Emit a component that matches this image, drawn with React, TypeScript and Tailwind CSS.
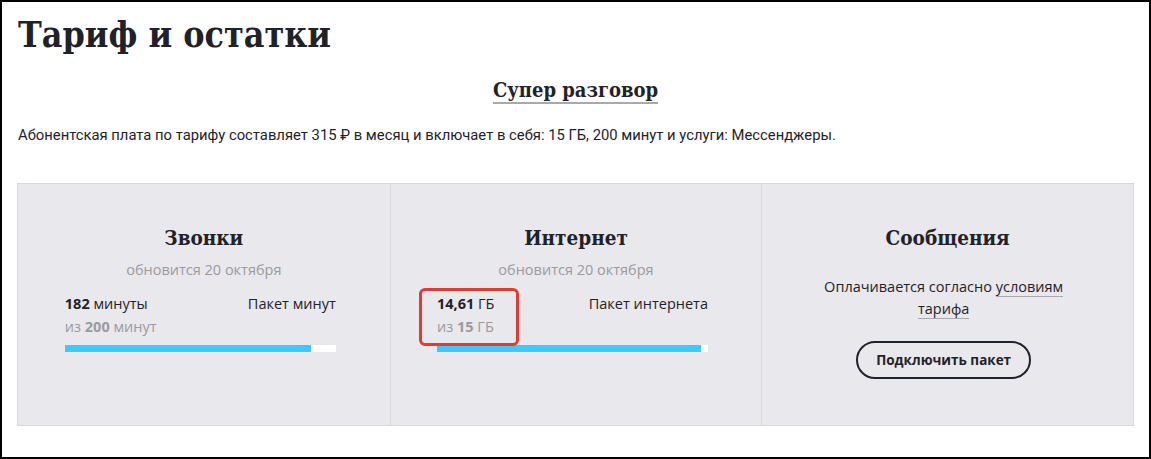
import React from 'react'

const serif = { fontFamily: '"DejaVu Serif", "Liberation Serif", serif', fontStretch: 'condensed' }

function Usage({ value, unit, total, totalUnit, label, pct }: { value: string; unit: string; total: string; totalUnit: string; label: string; pct: number }) {
  return (
    <div className="mr-[7px] mt-[12px] w-[271px]">
      <div className="flex justify-between text-[14.5px] leading-[23px] text-[#1f2229]">
        <div>
          <span className="font-bold">{value}</span> {unit}
        </div>
        <div>{label}</div>
      </div>
      <div className="text-[14.5px] leading-[23px] text-[#9a9a9f]">
        из <span className="font-bold">{total}</span> {totalUnit}
      </div>
      <div className="mt-[7px] h-[7px] w-full bg-white">
        <div className="h-full bg-[#3fc8fa]" style={{ width: `${pct}%` }} />
      </div>
    </div>
  )
}

export default function App() {
  return (
    <div className="relative box-border h-[459px] w-[1151px] border-2 border-black bg-white font-['Open_Sans',sans-serif] text-[#1f2229]">
      <h1 className="pl-4 pt-[11px] text-[35.5px] font-bold leading-[44px]" style={serif}>
        Тариф и остатки
      </h1>
      <div className="mt-[21px] flex justify-center">
        <span className="border-b-2 border-[#a9a9ad] text-[20px] font-bold leading-[24px]" style={serif}>
          Супер разговор
        </span>
      </div>
      <p className="mt-[21px] pl-4 text-[14.8px] leading-[20px] font-['Roboto',sans-serif]">
        Абонентская плата по тарифу составляет 315 ₽ в месяц и включает в себя: 15 ГБ, 200 минут и услуги: Мессенджеры.
      </p>

      <div className="mx-[15px] mt-[38px] grid h-[243px] grid-cols-3 border border-[#d5dadb] bg-[#e9e8ec]">
        <div className="flex flex-col items-center pt-[40px]">
          <h2 className="text-[20.5px] font-bold leading-[28px]" style={serif}>Звонки</h2>
          <div className="mt-[8px] text-[14.5px] leading-[20px] text-[#9a9a9f]">обновится 20 октября</div>
          <Usage value="182" unit="минуты" total="200" totalUnit="минут" label="Пакет минут" pct={91} />
        </div>
        <div className="flex flex-col items-center border-l border-[#d5dadb] pt-[40px]">
          <h2 className="text-[20.5px] font-bold leading-[28px]" style={serif}>Интернет</h2>
          <div className="mt-[8px] text-[14.5px] leading-[20px] text-[#9a9a9f]">обновится 20 октября</div>
          <Usage value="14,61" unit="ГБ" total="15" totalUnit="ГБ" label="Пакет интернета" pct={97.4} />
        </div>
        <div className="flex flex-col items-center border-l border-[#d5dadb] pt-[40px]">
          <h2 className="text-[20.5px] font-bold leading-[28px]" style={serif}>Сообщения</h2>
          <p className="mr-[8px] mt-[24px] w-[250px] text-center text-[14.5px] leading-[22px]">
            Оплачивается согласно{' '}
            <span className="border-b border-[#a9a9ad]">условиям тарифа</span>
          </p>
          <button className="mr-[8px] mt-[21px] h-[38px] rounded-full border-2 border-[#1f2229] px-[18px] text-[13.5px] font-bold">
            Подключить пакет
          </button>
        </div>
      </div>

      <div className="absolute left-[417px] top-[286px] h-[58px] w-[100px] rounded-[6px] border-[3px] border-[#e53935]" />
    </div>
  )
}
